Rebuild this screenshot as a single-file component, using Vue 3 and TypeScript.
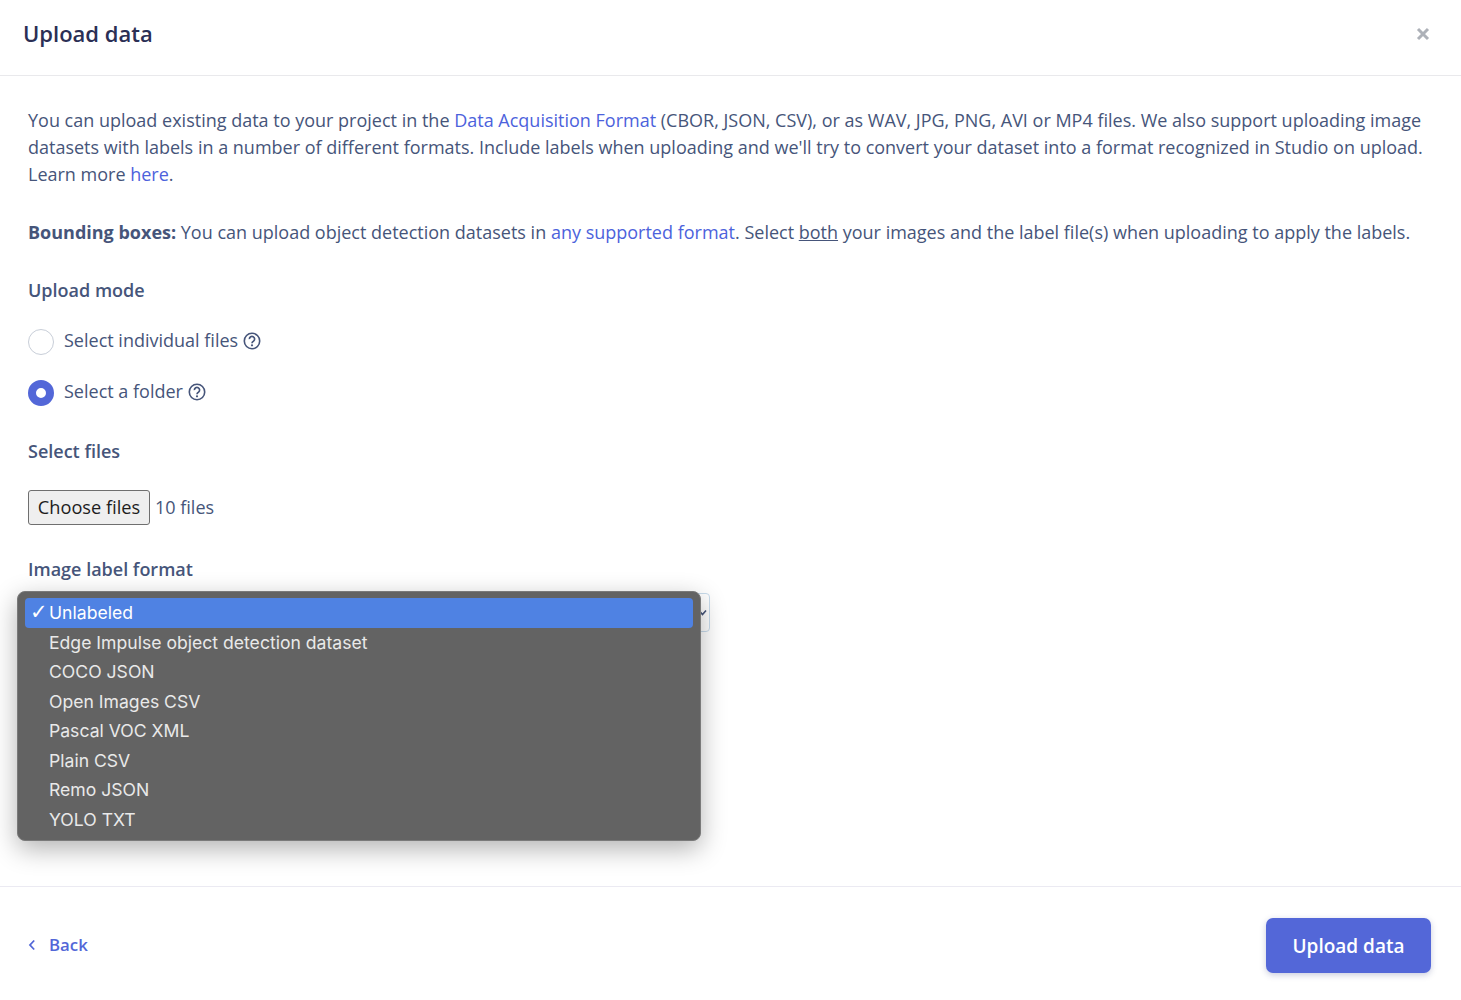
<script setup lang="ts">
interface Option { label: string; selected?: boolean }
const options: Option[] = [
  { label: 'Unlabeled', selected: true },
  { label: 'Edge Impulse object detection dataset' },
  { label: 'COCO JSON' },
  { label: 'Open Images CSV' },
  { label: 'Pascal VOC XML' },
  { label: 'Plain CSV' },
  { label: 'Remo JSON' },
  { label: 'YOLO TXT' },
]
</script>

<template>
  <div class="modal">
    <header class="head">
      <h1>Upload data</h1>
      <svg class="close" width="14" height="14" viewBox="0 0 14 14"><path d="M2 2l10 10M12 2L2 12" stroke="#adb1b8" stroke-width="3" fill="none"/></svg>
    </header>
    <main class="body">
      <p class="intro">You can upload existing data to your project in the <a>Data Acquisition Format</a> (CBOR, JSON, CSV), or as WAV, JPG, PNG, AVI or MP4 files. We also support uploading image datasets with labels in a number of different formats. Include labels when uploading and we'll try to convert your dataset into a format recognized in Studio on upload. Learn more <a>here</a>.</p>
      <p class="boxes"><b>Bounding boxes:</b> You can upload object detection datasets in <a>any supported format</a>. Select <u>both</u> your images and the label file(s) when uploading to apply the labels.</p>
      <div class="label mode">Upload mode</div>
      <div class="radio first">
        <span class="dot"></span><span>Select individual files</span>
        <svg class="help" width="18" height="18" viewBox="0 0 18 18"><circle cx="9" cy="9" r="7.7" fill="none" stroke="#46557a" stroke-width="1.6"/><path d="M6.4 7.1a2.6 2.6 0 1 1 4 2.1c-1 .6-1.4 1-1.4 2" fill="none" stroke="#46557a" stroke-width="1.7"/><circle cx="9" cy="13.3" r="1.1" fill="#46557a"/></svg>
      </div>
      <div class="radio second">
        <span class="dot on"></span><span>Select a folder</span>
        <svg class="help" width="18" height="18" viewBox="0 0 18 18"><circle cx="9" cy="9" r="7.7" fill="none" stroke="#46557a" stroke-width="1.6"/><path d="M6.4 7.1a2.6 2.6 0 1 1 4 2.1c-1 .6-1.4 1-1.4 2" fill="none" stroke="#46557a" stroke-width="1.7"/><circle cx="9" cy="13.3" r="1.1" fill="#46557a"/></svg>
      </div>
      <div class="label files">Select files</div>
      <div class="file-row"><span class="choose">Choose files</span><span class="count">10 files</span></div>
      <div class="label format">Image label format</div>
      <div class="select-wrap">
        <div class="select"><svg class="caret" width="10" height="8" viewBox="0 0 10 8"><path d="M1 1.5l3.5 4 3.5-4" fill="none" stroke="#46557a" stroke-width="1.6"/></svg></div>
        <ul class="menu">
          <li v-for="o in options" :key="o.label" :class="{ sel: o.selected }">
            <span class="tick">{{ o.selected ? '✓' : '' }}</span>{{ o.label }}
          </li>
        </ul>
      </div>
    </main>
    <footer class="foot">
      <a class="back">
        <svg width="8" height="12" viewBox="0 0 8 12"><path d="M6.2 1.5L2 6l4.2 4.5" fill="none" stroke="#5367d8" stroke-width="1.8"/></svg>
        <span>Back</span>
      </a>
      <button class="upload">Upload data</button>
    </footer>
  </div>
</template>

<style>
html, body { margin: 0; background: #fff; }
</style>

<style scoped>
.modal {
  width: 1461px;
  height: 1000px;
  display: flex;
  flex-direction: column;
  overflow: hidden;
  font-family: "Open Sans", sans-serif;
  font-size: 18px;
  line-height: 27px;
  color: #46557a;
  background: #fff;
}
.head {
  box-sizing: border-box;
  height: 76px;
  flex: none;
  display: flex;
  align-items: center;
  justify-content: space-between;
  padding: 0 31px 7px 23px;
  border-bottom: 1px solid #e9e9ec;
}
h1 { margin: 0 0 1px; font-size: 22px; font-weight: 600; color: #2b2f55; }
.body { flex: 1; padding: 31px 28px 0; }
p { margin: 0; }
a { color: #4c62dc; }
b { font-weight: 700; }
.boxes { margin-top: 31px; }
.label { font-weight: 600; color: #46557a; }
.mode { margin-top: 31px; }
.radio { display: flex; align-items: center; height: 27px; }
.first { margin-top: 23px; }
.second { margin-top: 24px; }
.dot {
  box-sizing: border-box;
  width: 26px;
  height: 26px;
  border-radius: 50%;
  border: 1.5px solid #c8ced8;
  margin: 2px 10px 0 0;
  background: #fff;
}
.dot.on { border: 8px solid #5367d8; }
.help { margin: 0 0 0 5px; }
.files { margin-top: 33px; }
.file-row { display: flex; align-items: center; margin-top: 25px; height: 35px; }
.choose {
  box-sizing: border-box;
  width: 122px;
  height: 35px;
  display: flex;
  align-items: center;
  justify-content: center;
  background: #efefef;
  border: 1px solid #6f6f6f;
  border-radius: 3px;
  color: #1d1d1d;
  font-size: 18.2px;
}
.count { margin-left: 5px; }
.format { margin-top: 31px; }
.select-wrap { position: relative; margin-top: 10px; }
.select {
  box-sizing: border-box;
  width: 682px;
  height: 39px;
  border: 1px solid #c9dcec;
  border-radius: 4px;
  background: #fff;
  display: flex;
  align-items: center;
  justify-content: flex-end;
  padding-right: 1px;
}
.menu {
  position: absolute;
  left: -11px;
  top: -2px;
  box-sizing: border-box;
  width: 684px;
  height: 250px;
  margin: 0;
  padding: 6px 7px;
  list-style: none;
  background: #636363;
  border: 1px solid #7a7a7a;
  border-radius: 8px;
  box-shadow: 0 8px 26px rgba(0, 0, 0, .3);
  font-family: Inter, sans-serif;
  font-size: 17.6px;
  color: #e9e9e9;
}
.menu li {
  height: 29.5px;
  line-height: 29.5px;
  display: flex;
  border-radius: 4px;
  padding-left: 5px;
}
.menu li.sel { background: #4f82e3; color: #fff; }
.tick { width: 19px; flex: none; font-family: "DejaVu Sans", sans-serif; font-size: 21px; }
.foot {
  box-sizing: border-box;
  flex: none;
  height: 114px;
  display: flex;
  align-items: center;
  justify-content: space-between;
  padding: 4px 30px 0 28px;
  border-top: 1px solid #ebeaf2;
}
.back { display: flex; align-items: center; gap: 13px; padding-bottom: 2px; font-weight: 600; font-size: 16.8px; color: #5367d8; }
.upload {
  width: 165px;
  height: 55px;
  border: none;
  border-radius: 7px;
  background: #5367d8;
  color: #fff;
  font: 600 19px "Open Sans", sans-serif;
  box-shadow: 0 2px 6px rgba(40, 50, 120, .25);
}
</style>
